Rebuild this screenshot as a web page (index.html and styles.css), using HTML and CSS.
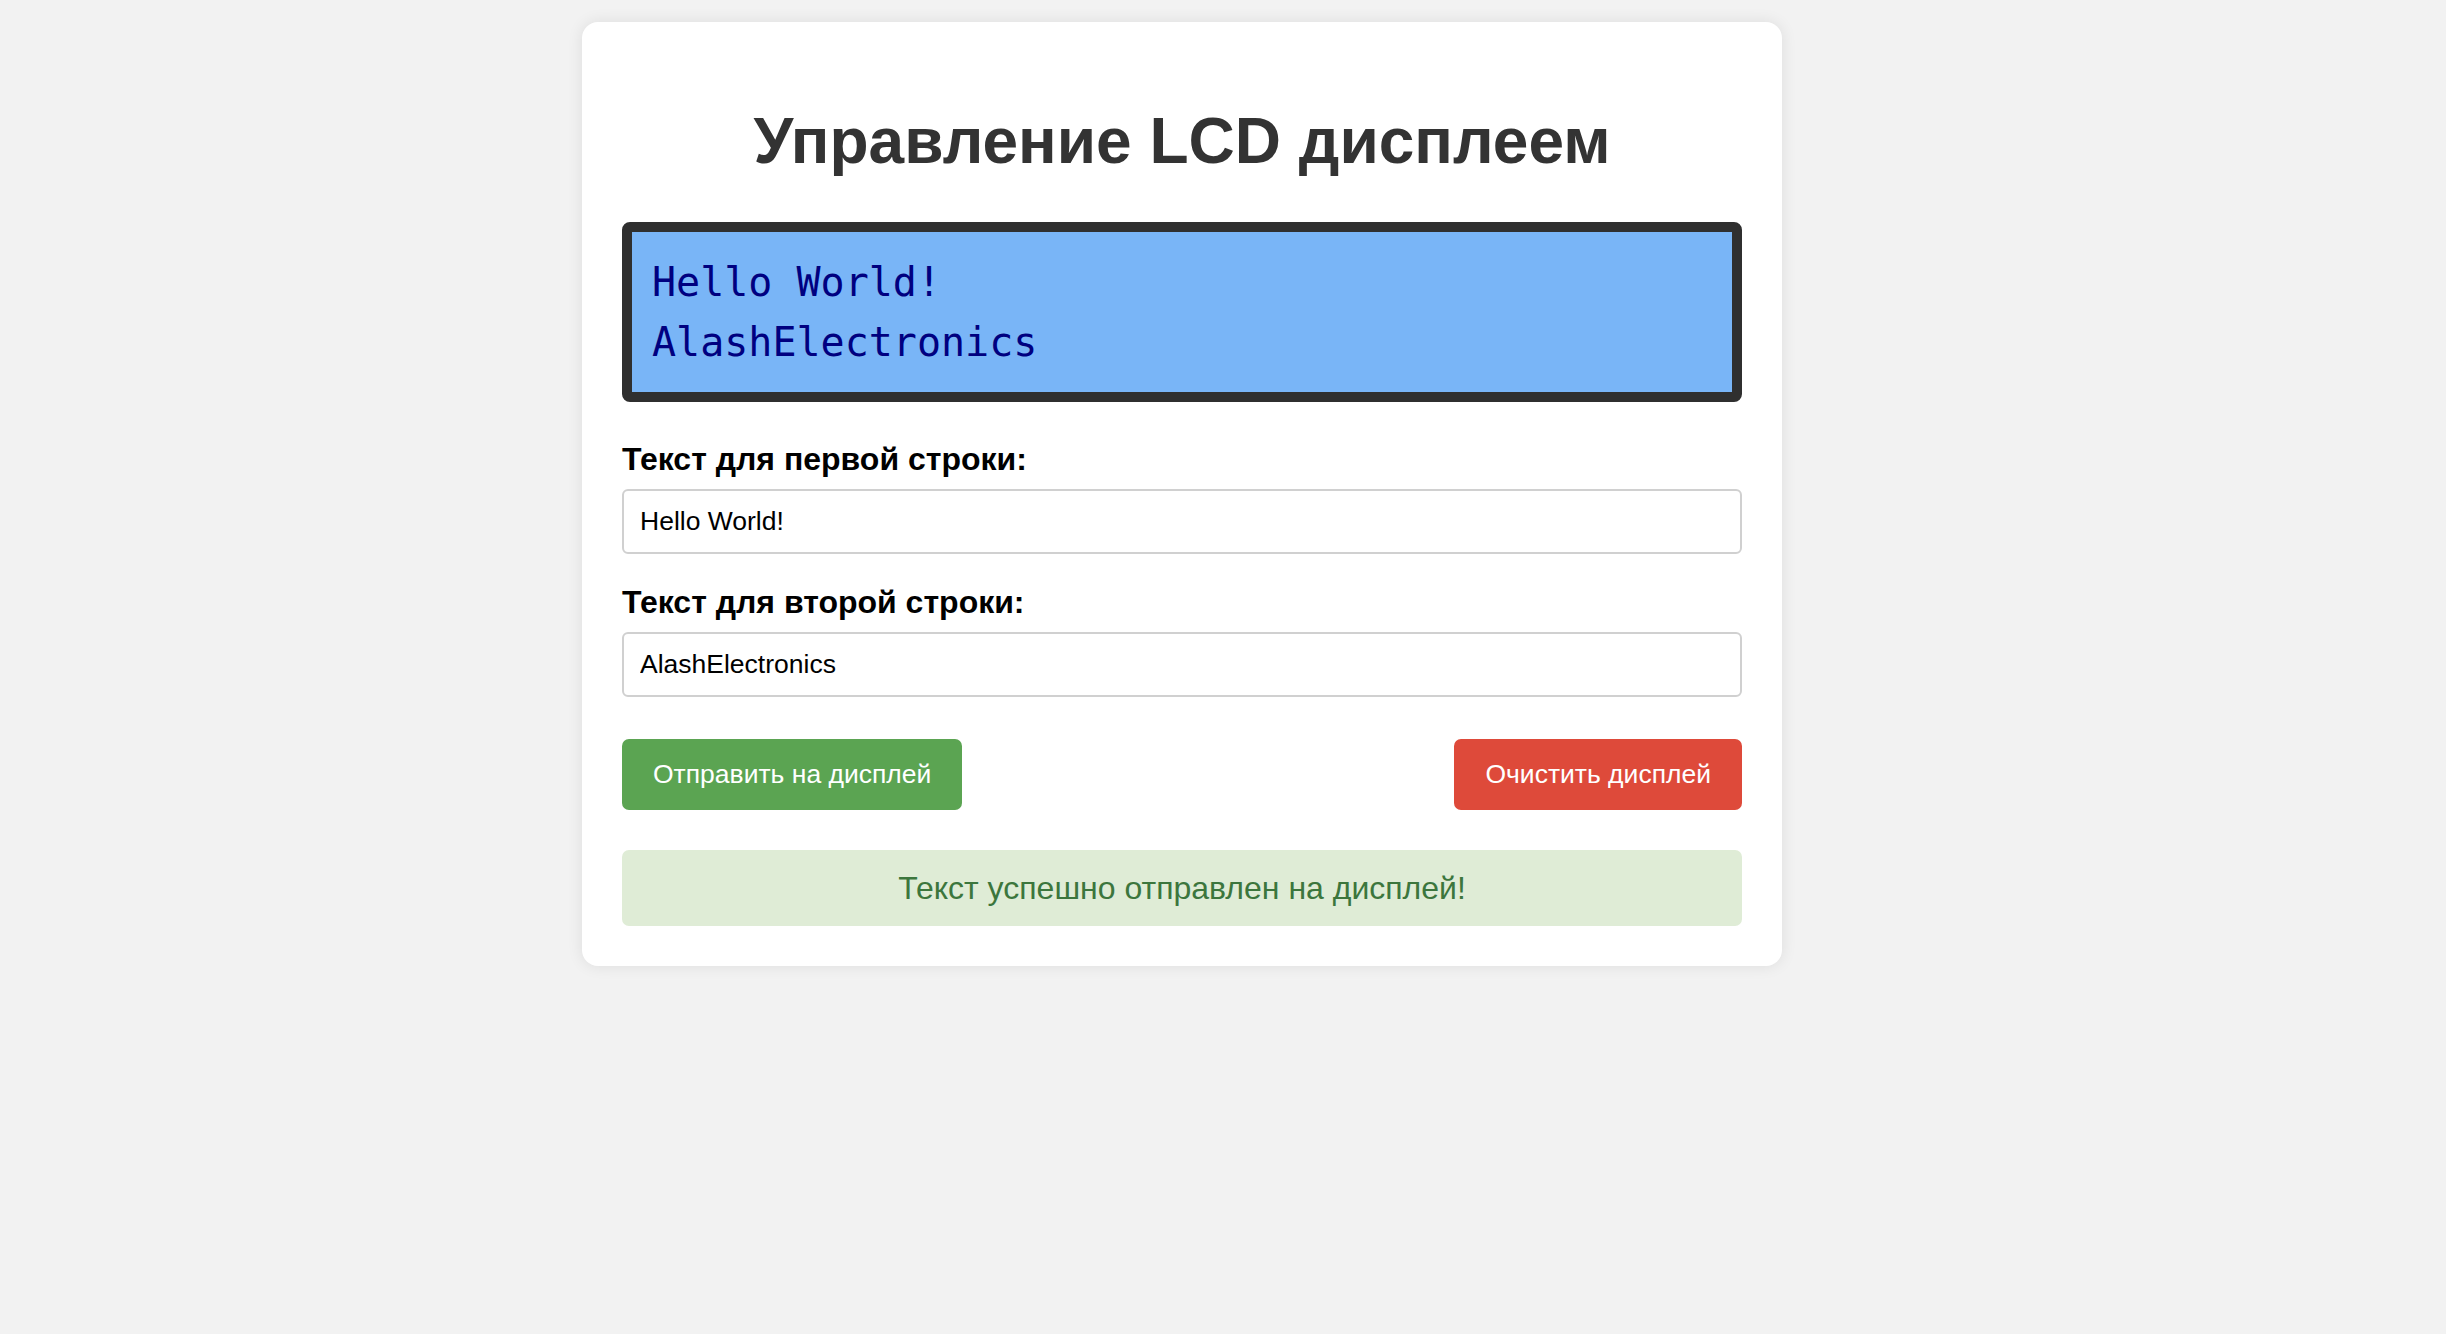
FILE: index.html
```html
<!DOCTYPE html>
<html lang="ru">
<head>
<meta charset="utf-8">
<title>Управление LCD дисплеем</title>
<link rel="stylesheet" href="styles.css">
</head>
<body>
<div class="page">
  <main class="card">
    <h1 class="title">Управление LCD дисплеем</h1>
    <div class="lcd">
      <div class="lcd-line">Hello World!</div>
      <div class="lcd-line">AlashElectronics</div>
    </div>
    <div class="field">
      <label class="label" for="line1">Текст для первой строки:</label>
      <input class="input" id="line1" type="text" value="Hello World!">
    </div>
    <div class="field">
      <label class="label" for="line2">Текст для второй строки:</label>
      <input class="input" id="line2" type="text" value="AlashElectronics">
    </div>
    <div class="actions">
      <button class="btn btn-send" type="button">Отправить на дисплей</button>
      <button class="btn btn-clear" type="button">Очистить дисплей</button>
    </div>
    <div class="message">Текст успешно отправлен на дисплей!</div>
  </main>
</div>
</body>
</html>
```
FILE: styles.css
```css
html, body {
  margin: 0;
  padding: 0;
  background: #f2f2f2;
  font-family: "Liberation Sans", Arial, sans-serif;
}

.page {
  padding: 22px 82px 40px 0;
}

.card {
  box-sizing: border-box;
  width: 1200px;
  margin: 0 auto;
  background: #ffffff;
  border-radius: 16px;
  padding: 40px;
  box-shadow: 0 0 16px rgba(0, 0, 0, 0.09);
}

.title {
  margin: 41px 0 43px;
  text-align: center;
  color: #333333;
  font-size: 64px;
  font-weight: bold;
  line-height: 76px;
}

.lcd {
  box-sizing: border-box;
  height: 180px;
  background: #79b5f7;
  border: 10px solid #2f2f2f;
  border-radius: 8px;
  padding: 20px 20px;
  font-family: "DejaVu Sans Mono", monospace;
  font-size: 40px;
  line-height: 60px;
  color: #000080;
  margin-bottom: 41px;
}

.field {
  display: flex;
  flex-direction: column;
  margin-bottom: 32px;
}

.label {
  font-size: 32px;
  font-weight: bold;
  color: #000000;
  line-height: 33px;
  margin-bottom: 13px;
}

.input {
  box-sizing: border-box;
  height: 65px;
  border: 2px solid #d0d0d0;
  border-radius: 6px;
  padding: 0 16px;
  font-family: "Liberation Sans", Arial, sans-serif;
  font-size: 26.5px;
  color: #000000;
  background: #ffffff;
  outline: none;
}

.actions {
  display: flex;
  justify-content: space-between;
  margin-top: 42px;
  margin-bottom: 40px;
}

.btn {
  height: 71px;
  border: none;
  border-radius: 7px;
  padding: 0 31px;
  font-family: "Liberation Sans", Arial, sans-serif;
  font-size: 26.5px;
  color: #ffffff;
  cursor: pointer;
}

.btn-send {
  background: #5ba452;
}

.btn-clear {
  background: #de4a3a;
}

.message {
  box-sizing: border-box;
  height: 76px;
  display: flex;
  align-items: center;
  justify-content: center;
  background: #dfecd6;
  color: #3c763d;
  border-radius: 7px;
  font-size: 32px;
}
```
